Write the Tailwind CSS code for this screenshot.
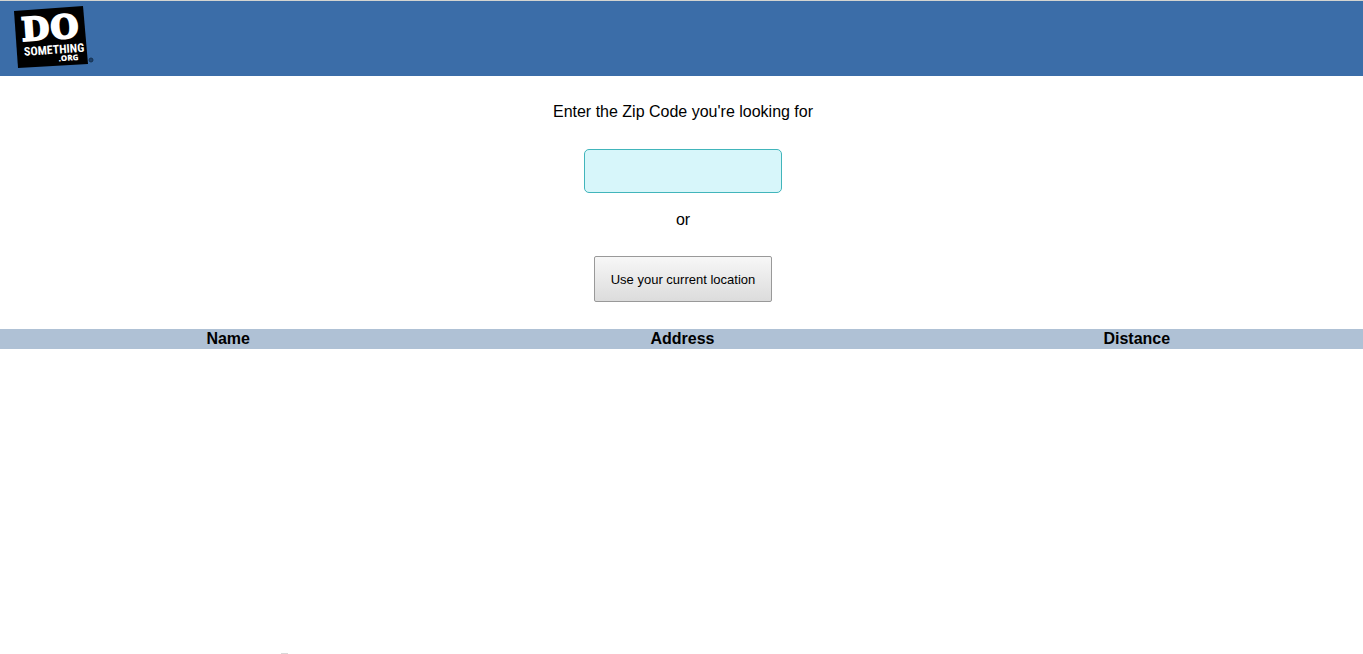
<!DOCTYPE html>
<html lang="en">
<head>
<meta charset="utf-8">
<meta name="viewport" content="width=device-width, initial-scale=1">
<title>DoSomething.org</title>
<script src="https://cdn.jsdelivr.net/npm/@tailwindcss/browser@4"></script>
</head>
<body class="flex min-h-screen flex-col bg-white font-['Liberation_Sans',Arial,sans-serif] text-base leading-5 text-black">
<header class="border-t border-[#d3d4d0] bg-[#3b6da8] pb-px pl-3">
  <a href="#" aria-label="DoSomething.org" class="block w-[84px]">
    <svg class="block h-[74px] w-[84px]" viewBox="12 1 84 74">
      <path d="M14 11 83 6 88 64 18 68Z" fill="#000"/>
      <g transform="rotate(-4 50 37)" fill="#fff" stroke="#fff">
        <text x="22" y="39" font-family="DejaVu Serif, serif" font-weight="bold" font-size="32" stroke-width="2">D</text>
        <text x="51" y="39" font-family="DejaVu Serif, serif" font-weight="bold" font-size="32" stroke-width="2">O</text>
        <text x="23" y="54" font-family="Roboto Condensed, Open Sans Condensed, Roboto, sans-serif" font-weight="bold" font-size="12" stroke-width="0">SOMETHING</text>
        <text x="57" y="62" font-family="Open Sans, sans-serif" font-weight="800" font-size="8" stroke-width="0">.ORG</text>
      </g>
      <circle cx="91" cy="60" r="2" fill="#1d416c" stroke="#16314f"/>
    </svg>
  </a>
</header>
<main class="flex grow flex-col">
  <form class="flex flex-col items-center pt-[26px] pl-[3px]">
    <label for="zip">Enter the Zip Code you're looking for</label>
    <input id="zip" type="text" inputmode="numeric" class="mt-[27px] h-11 w-[198px] rounded-[5px] border border-[#41b5bb] bg-[#d7f6fa] px-3">
    <p class="mt-[17px]">or</p>
    <button type="button" class="mt-[26px] rounded-[2px] border border-[#999] bg-linear-to-b from-[#f7f7f7] to-[#dcdcdc] px-4 pt-[13px] pb-[11px] text-[13px] leading-5">Use your current location</button>
  </form>
  <table class="mt-[27px] w-full table-fixed border-collapse bg-[#afc1d5]">
    <thead><tr><th class="py-0 pr-0 pl-[2px]">Name</th><th class="py-0 pr-0 pl-[2px]">Address</th><th class="py-0 pr-0 pl-[2px]">Distance</th></tr></thead>
  </table>
  <div class="mt-auto ml-[281px] h-px w-[7px] bg-[#d8d8d8]"></div>
</main>
</body>
</html>
